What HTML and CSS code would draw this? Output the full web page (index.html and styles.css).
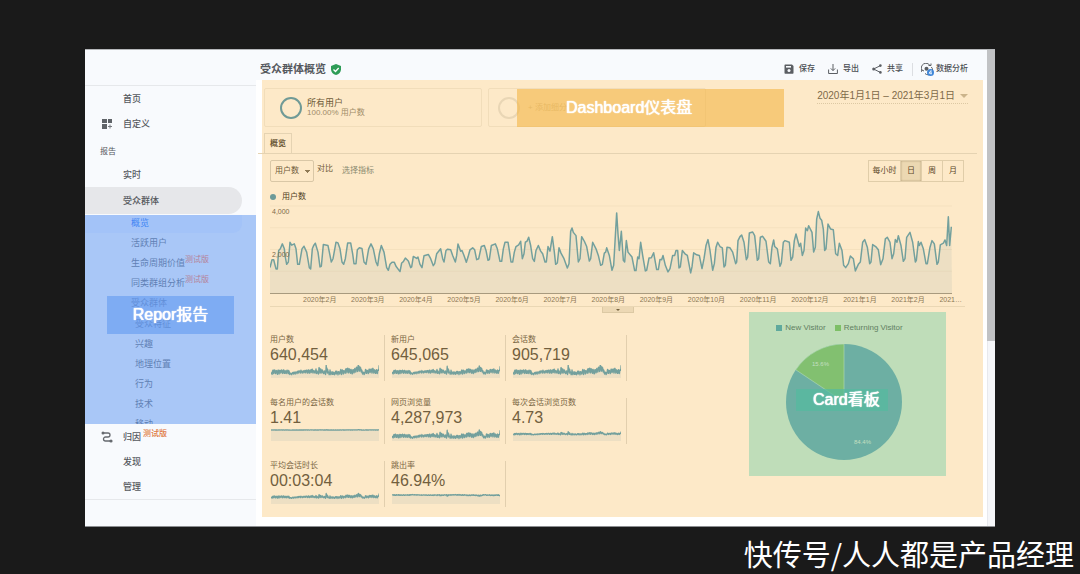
FILE: index.html
```html
<!DOCTYPE html>
<html lang="zh-CN">
<head>
<meta charset="utf-8">
<title>受众群体概览</title>
<link rel="stylesheet" href="styles.css">
</head>
<body>
<div class="app">
  <nav class="sidebar">
    <div class="side-main">
      <a class="nav" href="#">首页</a>
      <a class="nav" href="#"><svg class="nav-icon" viewBox="0 0 12 12"><path d="M1 1h5v4H1zM7 1h4v4H7zM1 6h5v5H1z" fill="#5f6368"/><path d="M9 6.500v4M7 8.500h4" stroke="#777b80"/></svg>自定义</a>
      <div class="nav-title">报告</div>
      <a class="nav" href="#">实时</a>
      <a class="nav current" href="#">受众群体</a>
      <div class="sub">
        <a class="sub-item selected" href="#">概览</a>
        <a class="sub-item" href="#">活跃用户</a>
        <a class="sub-item" href="#">生命周期价值<sup class="beta">测试版</sup></a>
        <a class="sub-item" href="#">同类群组分析<sup class="beta">测试版</sup></a>
        <a class="sub-item" href="#">受众群体</a>
        <div class="sub-group">
          <a class="sub-item" href="#">受众特征</a>
          <a class="sub-item" href="#">兴趣</a>
          <a class="sub-item" href="#">地理位置</a>
          <a class="sub-item" href="#">行为</a>
          <a class="sub-item" href="#">技术</a>
          <a class="sub-item" href="#">移动</a>
        </div>
        <div class="callout report-label">Repor报告</div>
      </div>
      <a class="nav" href="#"><svg class="nav-icon" viewBox="0 0 12 12"><path d="M2 2h5a2 2 0 0 1 0 4H4.500a2 2 0 0 0 0 4H10" fill="none" stroke="#666a6f" stroke-width="1.300"/><circle cx="2" cy="2" r="1.500" fill="#666a6f"/><circle cx="10" cy="10" r="1.600" fill="#666a6f"/></svg>归因<sup class="beta">测试版</sup></a>
      <a class="nav" href="#">发现</a>
      <a class="nav" href="#">管理</a>
    </div>
  </nav>

  <main class="main">
    <header class="header">
      <h1 class="title">受众群体概览</h1>
      <svg class="shield" viewBox="0 0 10 11"><path d="M5 0l5 2v3.500C10 8 8 10.200 5 11 2 10.200 0 8 0 5.500V2z" fill="#2e9c57"/><path d="M2.500 5.500l2 2 3.200-3.500" fill="none" stroke="#fff" stroke-width="1.300"/></svg>
      <div class="toolbar">
        <button class="tool"><svg viewBox="0 0 10 10"><path d="M1 .5h7L9.500 2v7a.7.7 0 0 1-.7.700H1.200A.7.7 0 0 1 .5 9V1z" fill="#5b5e63"/><path d="M2 2h5v1.600H2z" fill="#f8fafd"/><circle cx="5" cy="6.600" r="1.500" fill="#f8fafd"/></svg>保存</button>
        <button class="tool"><svg viewBox="0 0 10 10"><path d="M5 0v6.500M2.800 4.400L5 6.600l2.200-2.200M.6 5.500v4h8.800v-4" fill="none" stroke="#5b5e63"/></svg>导出</button>
        <button class="tool"><svg viewBox="0 0 10 10"><path d="M8.500 1.600L1.600 5l6.900 3.500" fill="none" stroke="#5b5e63"/><circle cx="1.700" cy="5" r="1.500" fill="#5b5e63"/><circle cx="8.400" cy="1.600" r="1.300" fill="#5b5e63"/><circle cx="8.400" cy="8.400" r="1.300" fill="#5b5e63"/></svg>共享</button>
        <button class="tool insights"><svg class="wide" viewBox="0 0 13 13"><path d="M1 7.500A4.500 4.500 0 0 1 9 2.500M10.300 4A4.500 4.500 0 0 1 4 10.500M7.500 2.500h2.500V.5M0 9l1-2 2 1" fill="none" stroke="#5b5e63"/><circle cx="5.500" cy="5.800" r="2" fill="#5b5e63"/><circle cx="9.500" cy="9.500" r="3.500" fill="#3f86d8"/><path d="M10 11.500v-4L8 10.200h3" fill="none" stroke="#fff" stroke-width=".8"/></svg>数据分析</button>
      </div>
    </header>

    <section class="dash">
      <div class="segments">
        <div class="segment"><span class="ring"></span><div><div class="seg-name">所有用户</div><div class="seg-note">100.00% 用户数</div></div></div>
        <div class="segment faint"><span class="ring"></span><span>+ 添加细分</span></div>
        <button class="date">2020年1月1日 – 2021年3月1日<span class="caret"></span></button>
        <div class="callout dash-label">Dashboard仪表盘</div>
      </div>
      <div class="tabs"><button class="tab">概览</button></div>
      <div class="controls">
        <select class="metric-select" aria-label="指标"><option>用户数</option></select>
        <span class="versus">对比</span>
        <a class="choose" href="#">选择指标</a>
        <div class="grain"><button>每小时</button><button class="on">日</button><button>周</button><button>月</button></div>
      </div>
      <div class="legend"><span class="dot"></span>用户数</div>
      <div class="chart">
        <svg id="trend" class="trend" viewBox="0 0 2046 270" preserveAspectRatio="none"></svg>
        <span class="tick top">4,000</span><span class="tick mid">2,000</span>
      </div>
      <div class="axis"><span>2020年2月</span><span>2020年3月</span><span>2020年4月</span><span>2020年5月</span><span>2020年6月</span><span>2020年7月</span><span>2020年8月</span><span>2020年9月</span><span>2020年10月</span><span>2020年11月</span><span>2020年12月</span><span>2021年1月</span><span>2021年2月</span><span>2021…</span></div>
      <div class="divider"><button class="handle" aria-label="收起"><span class="caret dark"></span></button></div>
      <div class="lower">
        <div class="metrics">
          <div class="metric"><div class="m-name">用户数</div><div class="m-value">640,454</div><svg class="spark" data-mid="7" data-amp="6"></svg></div>
          <div class="metric"><div class="m-name">新用户</div><div class="m-value">645,065</div><svg class="spark" data-mid="7" data-amp="5"></svg></div>
          <div class="metric"><div class="m-name">会话数</div><div class="m-value">905,719</div><svg class="spark" data-mid="7" data-amp="6"></svg></div>
          <div class="metric"><div class="m-name">每名用户的会话数</div><div class="m-value">1.41</div><svg class="spark" data-mid="2" data-amp="0.3"></svg></div>
          <div class="metric"><div class="m-name">网页浏览量</div><div class="m-value">4,287,973</div><svg class="spark" data-mid="8" data-amp="5"></svg></div>
          <div class="metric"><div class="m-name">每次会话浏览页数</div><div class="m-value">4.73</div><svg class="spark" data-mid="6" data-amp="2"></svg></div>
          <div class="metric"><div class="m-name">平均会话时长</div><div class="m-value">00:03:04</div><svg class="spark" data-mid="6" data-amp="3"></svg></div>
          <div class="metric"><div class="m-name">跳出率</div><div class="m-value">46.94%</div><svg class="spark" data-mid="4" data-amp="-1"></svg></div>
        </div>
        <div class="card">
          <div class="pie-legend"><span><i class="key teal"></i>New Visitor</span><span><i class="key green"></i>Returning Visitor</span></div>
          <div class="pie-box">
            <svg class="pie" viewBox="0 0 116 116"><circle cx="58" cy="58" r="58" fill="#6dafa3"/><path d="M58 58V0A58 58 0 0 0 9.800 25.800z" fill="#82c070" stroke="#b5dcb5" stroke-width=".6"/><text x="26" y="22" class="slice">15.6%</text><text x="68" y="100" class="slice">84.4%</text></svg>
            <div class="callout card-label">Card看板</div>
          </div>
        </div>
      </div>
    </section>
  </main>
  <div class="scroll"><div class="thumb"></div></div>
</div>
<footer class="credit">快传号/人人都是产品经理</footer>
<script src="chart.js"></script>
</body>
</html>
```
FILE: styles.css
```css
* { box-sizing: border-box; }
body {
  margin: 0;
  padding: 49px 85px 0;
  background: #1a1a1a;
  color: #55585d;
  font: 9px/12px "Liberation Sans", "Noto Sans CJK SC", sans-serif;
}
a { color: inherit; text-decoration: none; }
button, select { font: inherit; color: inherit; background: none; border: 0; padding: 0; margin: 0; }

.app { display: flex; min-height: 477px; background: #fff; border-top: 1px solid #b5b7ba; border-bottom: 1px solid #8b8d90; }

.sidebar { flex: 0 0 171px; padding-top: 35px; background: #f8fafd; }
.side-main { border-top: 1px solid #e6e8eb; border-bottom: 1px solid #e6e8eb; }
.nav { display: flex; align-items: center; position: relative; height: 25px; padding-left: 38px; font-weight: 500; }
.nav-icon { position: absolute; left: 16px; width: 12px; height: 12px; }
.nav-title { padding: 10px 0 4px 15px; font-size: 8px; }
.current { height: 27px; margin-right: 14px; background: #e6e7ea; border-radius: 0 14px 14px 0; }
.beta { margin: 0 0 6px 2px; font-size: 8px; line-height: 8px; color: #e07b45; }

.sub { position: relative; height: 209px; margin-top: 1px; overflow: hidden; background: #a9c7f7; color: #5f7fb4; }
.sub-item { display: flex; align-items: center; height: 20px; padding-left: 46px; }
.sub-item .beta { margin-left: 0; color: #b58299; }
.selected { height: 18px; margin-right: 14px; padding-bottom: 2px; color: #4285f4; background: #a3c3f8; border-radius: 0 0 9px 0; }
.sub-group { margin-top: 1px; padding-left: 4px; }

.callout { position: absolute; color: #fff; font-size: 16px; text-shadow: 0 0 1px #fff, 0 0 1px #fff; }
.report-label { left: 22px; right: 22px; top: 81px; line-height: 38px; text-align: center; background: rgba(98, 153, 240, .6); }

.main { flex: 1; min-width: 0; padding-bottom: 9px; }
.header { display: flex; align-items: center; height: 30px; padding: 8px 19px 0 4px; background: #f8fafd; }
.title { margin: 0 5px 0 0; font-size: 11px; font-weight: 700; line-height: 16px; color: #55585d; }
.shield { width: 10px; height: 11px; }
.toolbar { display: flex; gap: 13px; margin-left: auto; }
.tool { display: flex; align-items: center; gap: 5px; font-size: 8px; font-weight: 500; color: #4b4e53; }
.tool svg { width: 10px; height: 10px; }
.tool .wide { width: 13px; height: 13px; }
.insights { gap: 2px; padding-left: 8px; margin-left: -4px; border-left: 1px solid #dcdee2; }

.dash { margin: 0 4px 0 6px; min-height: 437px; padding: 8px 6px 0 2px; background: #fde9c8; color: #6e5a38; }
.segments { display: flex; position: relative; gap: 6px; }
.segment { display: flex; align-items: center; gap: 5px; width: 218px; height: 39px; padding-left: 15px; border: 1px solid #f1ddba; border-radius: 2px; font-size: 8px; line-height: 10px; }
.seg-name { font-size: 9px; }
.seg-note { color: #a08c69; }
.ring { width: 22px; height: 22px; border: 2px solid #709a96; border-radius: 50%; }
.faint { padding-left: 9px; gap: 8px; color: #d5bd91; }
.faint .ring { border-color: #e9d6b5; }
.dash-label { left: 253px; top: 1px; width: 267px; line-height: 38px; padding-left: 49px; background: rgba(243, 182, 70, .6); }
.date { display: flex; align-items: center; align-self: flex-start; gap: 5px; height: 16px; margin: 0 9px 0 auto; border-bottom: 1px dotted #dcc8a3; font-size: 10px; color: #7e6a48; }
.caret { border: 4px solid transparent; border-top-color: #cbb48b; border-bottom: 0; }

.tabs { display: flex; margin: 6px 0 0 -6px; padding-left: 6px; border-bottom: 1px solid #e5d3b2; }
.tab { height: 20px; width: 28px; border: 1px solid #e5d3b2; border-bottom: 0; font-size: 8px; font-weight: 700; color: #6b5836; }
.controls { display: flex; align-items: center; padding: 6px 13px 0 6px; font-size: 8px; }
.metric-select { width: 44px; height: 22px; padding-left: 4px; border: 1px solid #d9c7a6; border-radius: 2px; appearance: none; background: linear-gradient(45deg, transparent 50%, #8f7a55 50%) 33px 9px / 3px 3px no-repeat, linear-gradient(315deg, transparent 50%, #8f7a55 50%) 36px 9px / 3px 3px no-repeat; }
.versus { margin: 0 9px 4px 3px; }
.choose { color: #8a8a70; }
.grain { display: flex; margin-left: auto; border: 1px solid #e0cda9; }
.grain button { width: 21px; height: 20px; border-right: 1px solid #e0cda9; color: #5b4828; }
.grain button:first-child { width: 32px; }
.grain button:last-child { width: 20px; border-right: 0; }
.grain .on { background: #ecd8b2; box-shadow: inset 0 0 2px #a8946e; }
.legend { display: flex; align-items: center; gap: 6px; height: 22px; padding: 8px 0 0 6px; font-size: 8px; color: #4f3e21; }
.dot { width: 6px; height: 6px; border-radius: 50%; background: #6d9a98; }

.chart { position: relative; height: 90px; margin: 0 25px 0 6px; border-bottom: 1px solid #a89a7e; }
.trend { display: block; width: 100%; height: 89px; }
.tick { position: absolute; left: 2px; font-size: 7px; line-height: 8px; color: #7e6a48; }
.top { top: 4px; }
.mid { top: 47px; }
.axis { display: flex; justify-content: space-between; margin: 0 15px 0 39px; font-size: 7px; line-height: 12px; color: #8b7754; }
.divider { display: flex; justify-content: center; height: 6px; margin: 0 12px 0 6px; border-top: 1px solid #ead7b4; }
.handle { display: flex; align-items: center; justify-content: center; width: 32px; height: 6px; background: #ecd8b4; border: 1px solid #dcc9a4; border-top: 0; }
.caret.dark { border-width: 2px; border-bottom: 0; border-top-color: #75623f; }

.lower { display: flex; justify-content: space-between; align-items: flex-start; padding: 0 31px 0 6px; }
.metrics { display: grid; grid-template-columns: repeat(3, 121px); row-gap: 17px; padding-top: 23px; }
.metric { height: 46px; margin-right: 6px; border-right: 1px solid #e2cfae; }
.m-name { font-size: 8px; line-height: 10px; color: #7b6744; }
.m-value { font-size: 16px; line-height: 20px; color: #725f3e; }
.spark { display: block; width: 108px; height: 14px; margin-left: 1px; }

.card { width: 197px; height: 164px; padding-top: 10px; background: #bfddb9; }
.pie-legend { display: flex; justify-content: center; gap: 9px; margin-right: 16px; font-size: 8px; white-space: nowrap; color: #5f8062; }
.pie-legend span { display: flex; align-items: center; gap: 3px; }
.key { width: 6px; height: 6px; }
.teal { background: #5fa99d; }
.green { background: #7dbf66; }
.pie-box { position: relative; width: 116px; margin: 10px 0 0 37px; }
.pie { display: block; width: 116px; height: 116px; }
.slice { font-size: 6px; fill: #c4dfc0; }
.card-label { left: 10px; top: 45px; width: 92px; line-height: 22px; padding-left: 17px; background: rgba(84, 187, 158, .7); }

.scroll { flex: 0 0 8px; background: #f5f6f9; border-left: 1px solid #e8e9ed; }
.thumb { height: 291px; margin-left: -1px; background: #c1c2c4; }
.credit { margin: 5px -79px 0 0; text-align: right; font: 29px/43px "Noto Sans CJK SC", sans-serif; color: #fff; }
```
FILE: chart.js
```js
// Daily users as x,y pairs; each block is shifted to its place on the time axis.
const blocks = [
  [-30, "30,232 36,208 41,208 48,236 52,236 56,180 61,175 67,160 73,175 76,200 80,222 85,215 90,155 95,164 103,160 108,175 113,222 118,222 126,175 132,167 140,185 148,232 152,236 157,175 161,165 166,158 174,185 180,230 184,228 190,162 204,165 208,185 214,215 219,205 228,155 234,157 240,175 246,215 251,222 256,205 263,157 272,157 278,190 282,220 288,220 292,178 298,172 306,174 312,215 318,222 326,175 333,160 340,175 348,215 353,226 358,190 364,165 372,185 380,232 385,240 390,222 396,216 403,216 408,228 420,244 425,218 430,214 436,203 445,212 452,232 455,230 460,198 470,204 474,200 480,222 486,232 492,196 505,192 512,205 520,226 524,220 530,190 542,175 548,205 552,215 558,180 563,176 572,178 578,195 586,215 590,195 594,160 602,182 606,180 612,195 619,216 624,200 630,178 638,172 644,178 650,208 656,205 664,168 673,165 678,180 684,210 688,208 694,165 706,160 712,175"],
  [660, "30,213 35,213 40,175 45,155 54,155 58,180 63,215 68,215 73,185 78,168 86,163 92,152 97,205 102,190 106,155 111,152 116,140 122,165 128,205 133,213 138,180 145,165 152,182 158,190 165,215 169,215 174,168 180,182 187,138 193,185 197,222 202,218 207,172 213,188 222,205 232,233 237,220 242,122 246,112 250,125 258,135 265,215 270,205 275,138 283,152 290,168 298,212 302,205 308,155 318,175 325,195 332,225 337,222 343,188 347,185 350,172 358,195 366,240 371,225 380,66 384,130 388,180 394,122 400,210 404,215 409,150 414,185 426,200 434,241 438,241 443,200 447,205 452,155 458,195 466,242 470,240 477,203 484,202 491,187 500,238 505,238 510,207 515,208 519,195 526,225 534,245 540,235 548,195 554,195 558,180 563,180 567,233 571,230 577,180 585,190 592,195 602,248 606,230 611,187 620,193 628,195 636,235 642,205 648,165 654,147 660,180 668,240 673,220 678,170 683,155 690,168 697,172 702,230 706,225 711,170 720,172 728,185 737,220 740,215 744,150"],
  [1380, "30,138 35,133 42,155 49,208 53,200 58,127 68,124 74,135 82,210 86,205 91,140 98,137 108,152 116,215 121,220 126,170 131,148 134,168 142,175 150,228 154,218 160,155 165,150 178,155 183,210 188,200 193,150 198,130 208,168 212,158 217,195 222,180 227,112 232,120 236,105 246,125 251,185 256,170 260,85 265,62 270,82 275,88 280,115 284,180 288,175 294,100 302,115 310,117 317,190 323,195 328,158 336,180 341,225 347,232 355,220 361,197 370,205 376,242 385,222 391,215 398,155 404,147 412,170 419,220 423,215 428,162 437,168 445,178 452,223 459,205 466,145 472,140 480,155 486,205 491,190 496,147 501,155 505,135 513,165 520,213 525,205 530,140 540,125 548,155 556,215 559,210 565,153 568,165 573,155 580,175 588,220 592,220 600,170 606,150 613,160 621,222 625,215 631,163 640,158 645,148 650,165 655,78 659,165 664,108"]
];
const points = blocks.flatMap(([shift, text]) =>
  text.split(" ").map(p => {
    const [x, y] = p.split(",").map(Number);
    return [x + shift, y - 39];
  }));

function draw(svg, pts, width, bottom, stroke) {
  const line = pts.map(p => p.map(n => n.toFixed(1)).join(",")).join(" ");
  svg.innerHTML +=
    `<polygon points="0,${bottom} ${line} ${width},${bottom}" fill="#80a0a0" fill-opacity=".13"/>` +
    `<polyline points="${line}" fill="none" stroke="#73a09d" stroke-width="${stroke}" stroke-linejoin="round"/>`;
}

const trend = document.getElementById("trend");
trend.innerHTML = [6, 72, 138, 204].map(y => `<path d="M0 ${y}H2046" stroke="#f5e1be" stroke-width="3"/>`).join("");
draw(trend, points, 2046, 270, 4.5);

document.querySelectorAll(".spark").forEach(svg => {
  const mid = Number(svg.dataset.mid), amp = Number(svg.dataset.amp);
  svg.setAttribute("viewBox", "0 0 108 14");
  draw(svg, points.map(([x, y]) => [x / 2034 * 108, mid + (y - 155) / 110 * amp]), 108, 13, 1.3);
});
```
